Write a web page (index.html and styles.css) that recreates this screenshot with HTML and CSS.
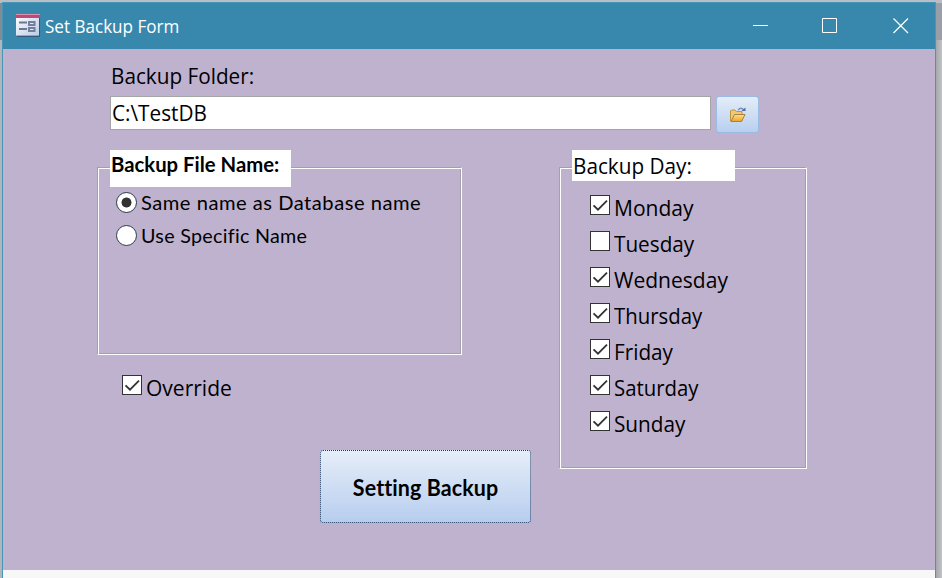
FILE: index.html
```html
<!DOCTYPE html>
<html lang="en">
<head>
<meta charset="utf-8">
<title>Set Backup Form</title>
<link rel="stylesheet" href="styles.css">
</head>
<body>
<div class="window">
  <header class="titlebar">
    <svg class="form-icon" width="24" height="23" viewBox="0 0 24 23">
      <defs>
        <linearGradient id="paper" x1="0" y1="0" x2="1" y2="1"><stop offset="0" stop-color="#fff"/><stop offset="1" stop-color="#bccbe6"/></linearGradient>
      </defs>
      <path d="M0 0h23v21.500H0z" fill="url(#paper)"/>
      <path d="M23.500 1v21.500H1" fill="none" stroke="#34577a"/>
      <path d="M0 0h24v4H0z" fill="#c04878"/><path d="M0 0h24v1H0z" fill="#dc91ad"/>
      <path d="M3 8.500h8M3 15h8" stroke="#6a7894" stroke-width="1.800"/>
      <path d="M13 8h5.500v3H13zM13 14h5.500v3H13z" fill="#e2e9f5" stroke="#717f9c" stroke-width="2"/>
    </svg>
    <h1 class="title"><span class="fit title-fit">Set Backup Form</span></h1>
    <svg class="controls" width="157" height="17" viewBox="0 0 157 17" fill="none" stroke="#fff">
      <path d="M0 8.500h15M69.500 1.500h14v14h-14z"/>
      <path d="M140.500 1.500l14.500 14.500M155 1.500L140.500 16" stroke-width="1.200"/>
    </svg>
  </header>
  <main class="form">
    <section class="folder">
      <label class="ui folder-label" for="path"><span class="fit">Backup Folder:</span></label>
      <div class="folder-row">
        <div class="path ui" id="path"><span class="fit">C:\TestDB</span></div>
        <button class="browse" aria-label="Browse">
          <svg width="18" height="16" viewBox="0 0 18 16">
            <defs><linearGradient id="gold" x1="0" y1="0" x2="0" y2="1"><stop offset="0" stop-color="#ffe08a"/><stop offset="1" stop-color="#e8a32c"/></linearGradient></defs>
            <path d="M1.500 14V4l1-1h3.500l1.500 1.500H13V14z" fill="#eecb72" stroke="#bd9341"/>
            <path d="M2 14.500L5.500 7.500H16L12.500 14.500z" fill="url(#gold)" stroke="#a98040"/>
            <path d="M9 3Q12-.5 15 3" fill="none" stroke="#7893bb" stroke-width="1.300"/>
            <path d="M12.500 4h4V.5z" fill="#4d6c9c"/>
          </svg>
        </button>
      </div>
    </section>
    <div class="groups">
      <div class="left">
        <section class="group name-group">
          <h2 class="legend name-legend"><span class="fit name-fit">Backup File Name:</span></h2>
          <div class="radio"><i class="dot on"></i><span class="fit same-fit">Same name as Database name</span></div>
          <div class="radio"><i class="dot"></i><span class="fit specific-fit">Use Specific Name</span></div>
        </section>
        <div class="check override"><i class="box on"></i><span class="ui fit wide">Override</span></div>
      </div>
      <section class="group day-group">
        <h2 class="legend day-legend ui"><span class="fit">Backup Day:</span></h2>
        <div class="check"><i class="box on"></i><span class="ui fit wide">Monday</span></div>
        <div class="check"><i class="box"></i><span class="ui fit">Tuesday</span></div>
        <div class="check"><i class="box on"></i><span class="ui fit wide">Wednesday</span></div>
        <div class="check"><i class="box on"></i><span class="ui fit narrow">Thursday</span></div>
        <div class="check"><i class="box on"></i><span class="ui fit">Friday</span></div>
        <div class="check"><i class="box on"></i><span class="ui fit narrow">Saturday</span></div>
        <div class="check"><i class="box on"></i><span class="ui fit">Sunday</span></div>
      </section>
    </div>
    <button class="submit"><span class="fit submit-fit">Setting Backup</span></button>
  </main>
  <footer class="status"></footer>
</div>
<script src="checks.js"></script>
</body>
</html>
```
FILE: checks.js
```js
const tick = '<svg width="18" height="18" viewBox="0 0 18 18" fill="none" stroke="#333" stroke-width="1.8"><path d="M2.500 9.300L7 13.700L16 4.700"/></svg>';
document.querySelectorAll('.box.on').forEach((box) => { box.innerHTML = tick; });
```
FILE: styles.css
```css
* { box-sizing: border-box; }
body {
  margin: 0;
  width: 942px;
  height: 578px;
  overflow: hidden;
  padding: 2px 6px 0 2px;
  background:
    linear-gradient(#b9bdc6, #b9bdc6) 0 0 / 100% 3px no-repeat,
    linear-gradient(90deg, #858b92, #9a9fa7) 0 3px / 100% 37px no-repeat,
    linear-gradient(90deg, #b3b5ba 935px, #a4a7ab 936px, #c2c4c7 942px);
  font-family: "Open Sans", sans-serif;
  color: #000;
}
h1, h2 { margin: 0; font-weight: 400; }
.window { height: 576px; border: 1px solid #4796b6; border-bottom: 0; display: flex; flex-direction: column; }
.titlebar { height: 46px; background: #3788ac; display: flex; align-items: center; padding: 0 25px 0 13px; color: #fff; }
.form-icon { position: relative; top: -1px; margin-right: 5px; }
.title { flex: 1; font-size: 18px; line-height: 24px; }
.controls { margin-bottom: 1px; }
.fit { display: inline-block; transform-origin: 0 50%; white-space: nowrap; transform: scaleX(.942); }
.wide { transform: scaleX(.956); }
.narrow { transform: scaleX(.925); }
.title-fit { transform: scaleX(.948); }
.name-fit { transform: scaleX(1.015); }
.same-fit { letter-spacing: .5px; transform: scaleX(1.007); }
.specific-fit { letter-spacing: .3px; transform: scaleX(.985); }
.ui { font-family: "Open Sans", sans-serif; font-size: 22px; line-height: 30px; }
.form { height: 521px; background: #bfb2cf; padding: 11px 0 0 94px; }
.folder { padding-left: 13px; }
.folder-label { display: block; padding-left: 1px; height: 36px; }
.folder-row { display: flex; gap: 5px; align-items: flex-start; }
.path { width: 601px; height: 34px; background: #fff; border: 1px solid #a5a5a5; padding: 0 1px; }
.browse { width: 43px; height: 37px; padding: 0; border: 1px solid #9bbbe3; border-radius: 3px; background: linear-gradient(#e4edf8, #b9cfef); display: flex; align-items: center; justify-content: center; }
.groups { display: flex; gap: 97px; padding-top: 34px; }
.left { width: 365px; }
.group { border: 1px solid; border-color: #a3a1a5 #fff #fff #a3a1a5; box-shadow: inset 1px 1px #fff, inset -1px -1px #a3a1a5; }
.name-group { height: 188px; padding-left: 12px; }
.legend { background: #fff; }
.name-legend { width: 181px; height: 37px; margin: -18px 0 -1px 0; padding-left: 1px; font: 700 20px/28px Lato, sans-serif; }
.radio { height: 33px; display: flex; align-items: center; padding-left: 6px; gap: 4px; font: 20px/26px Lato, sans-serif; }
.radio .fit { margin-top: -2px; }
.dot { width: 21px; height: 21px; margin-top: -1px; border: 1px solid #2d3c4b; border-radius: 50%; background: #fff; }
.dot.on { background: radial-gradient(circle, #333 4.700px, #fff 5.300px); }
.check { height: 36px; display: flex; gap: 4px; }
.check .ui { margin-top: -3px; }
.box { flex: none; width: 20px; height: 20px; background: #fff; border: 1px solid #333; }
.box svg { display: block; }
.override { margin: 20px 0 0 25px; }
.day-group { width: 248px; height: 302px; padding-left: 30px; }
.day-legend { width: 163px; height: 31px; margin: -18px 0 14px -18px; padding-left: 1px; line-height: 30px; }
.submit { display: block; width: 211px; height: 73px; margin: -19px 0 0 223px; padding: 2px 0 0; border: 1px dotted #203b60; border-radius: 3px; background: linear-gradient(#e6eef9, #b7cdee) border-box; box-shadow: 0 0 0 1px #9bbce055; font: 700 22px/30px Lato, sans-serif; }
.submit-fit { transform-origin: 50%; letter-spacing: .1px; transform: scaleX(.975); }
.status { flex: 1; background: #f7f7f7; }
```
